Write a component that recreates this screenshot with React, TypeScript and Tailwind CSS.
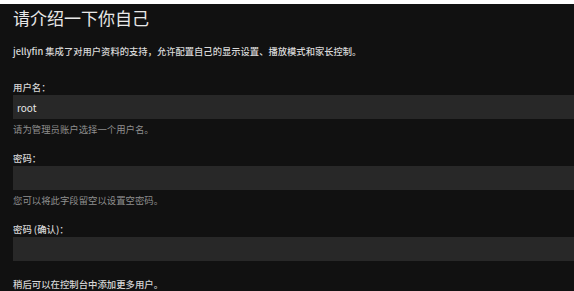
import React from "react";

const font = { fontFamily: '"Noto Sans CJK SC", "Noto Sans", sans-serif' };

interface FieldProps {
  label: string;
  value?: string;
  help?: string;
  className?: string;
}

const Field = (props: FieldProps) => {
  const { label, value, help, className } = props;
  return (
    <div className={className}>
      <div className="text-[9.4px] leading-[12px] font-medium text-[#d6d6d6]">{label}</div>
      <div className="mt-[2px] h-[24px] bg-[#282828] flex items-center pl-[4px] text-[10px] text-[#e6e6e6]">
        {value}
      </div>
      {help && (
        <div className="mt-[4px] text-[9.4px] leading-[12px] text-[#8f8f8f]">{help}</div>
      )}
    </div>
  );
};

const App = () => {
  return (
    <div className="w-[574px] h-[291px] overflow-hidden bg-[#111111]" style={font}>
      <div className="h-[4px] bg-white"></div>
      <div className="pl-[13px]">
        <div className="pt-[3px] text-[17px] leading-[21px] text-[#e8e8e8]">请介绍一下你自己</div>
        <div className="mt-[17px] text-[9.3px] leading-[12px] font-medium text-[#d9d9d9]">
          jellyfin 集成了对用户资料的支持，允许配置自己的显示设置、播放模式和家长控制。
        </div>
        <Field className="mt-[24px]" label="用户名：" value="root" help="请为管理员账户选择一个用户名。" />
        <Field className="mt-[17px]" label="密码：" help="您可以将此字段留空以设置空密码。" />
        <Field className="mt-[17px]" label="密码 (确认)：" />
        <div className="mt-[17px] text-[9.4px] leading-[12px] font-medium text-[#d6d6d6]">
          稍后可以在控制台中添加更多用户。
        </div>
      </div>
    </div>
  );
};

export default App;
